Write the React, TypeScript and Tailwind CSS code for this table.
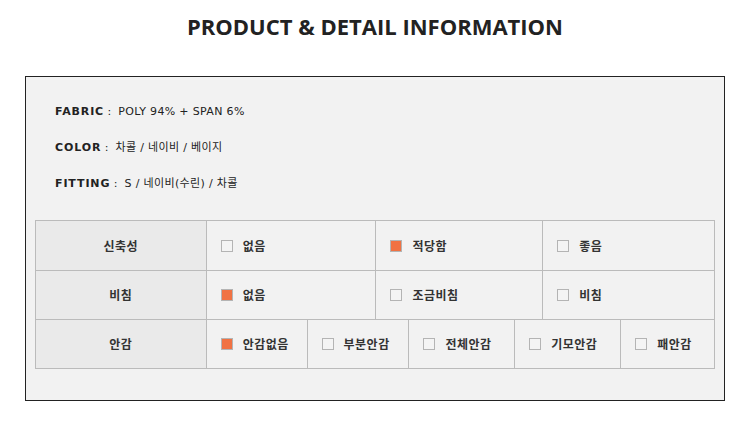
import React from 'react';
import type { FC } from 'react';

type Option = { label: string; checked?: boolean; width: string };
type Row = { title: string; options: Option[] };

const ROWS: Row[] = [
  {
    title: '신축성',
    options: [
      { label: '없음', width: 'w-[170px]' },
      { label: '적당함', checked: true, width: 'w-[167px]' },
      { label: '좋음', width: 'w-[172px]' },
    ],
  },
  {
    title: '비침',
    options: [
      { label: '없음', checked: true, width: 'w-[170px]' },
      { label: '조금비침', width: 'w-[167px]' },
      { label: '비침', width: 'w-[172px]' },
    ],
  },
  {
    title: '안감',
    options: [
      { label: '안감없음', checked: true, width: 'w-[101px]' },
      { label: '부분안감', width: 'w-[102px]' },
      { label: '전체안감', width: 'w-[106px]' },
      { label: '기모안감', width: 'w-[106px]' },
      { label: '패안감', width: 'w-[94px]' },
    ],
  },
];

const SPECS = [
  { key: 'FABRIC', value: 'POLY 94% + SPAN 6%' },
  { key: 'COLOR', value: '차콜 / 네이비 / 베이지' },
  { key: 'FITTING', value: 'S / 네이비(수린) / 차콜' },
];

const Box: FC<{ checked?: boolean }> = ({ checked }) => (
  <span
    className={`inline-block h-[12px] w-[12px] shrink-0 border border-[#b4b4b4] ${
      checked ? 'bg-[#f07243]' : 'bg-[#f4f4f4]'
    }`}
  />
);

const App: FC = () => {
  return (
    <div className="min-h-[429px] w-[750px] bg-white">
      <h1 className="flex h-[76px] items-start justify-center pt-[10px] font-['Open_Sans',sans-serif] text-[22px] font-bold leading-[32px] text-[#222]">
        PRODUCT &amp; DETAIL INFORMATION
      </h1>

      <section className="mx-[25px] h-[325px] border border-[#222] bg-[#f2f2f2]">
        <ul className="flex flex-col gap-[22px] pl-[29px] pt-[28px] font-['DejaVu_Sans','Noto_Sans_CJK_KR',sans-serif] text-[11px] leading-[14px] text-[#222]">
          {SPECS.map((spec) => (
            <li key={spec.key} className="h-[14px]">
              <span className="font-bold tracking-[0.08em]">{spec.key}</span>
              <span> : &nbsp;</span>
              <span className="tracking-[0.03em]">{spec.value}</span>
            </li>
          ))}
        </ul>

        <div className="ml-[9px] mt-[29px] w-[680px] border-l border-t border-[#bbb] font-['Noto_Sans_CJK_KR',sans-serif] text-[12px] font-bold tracking-[0.04em] text-[#333]">
          {ROWS.map((row, i) => (
            <div key={row.title} className={`flex ${i === 0 ? 'h-[50px]' : 'h-[49px]'}`}>
              <div className="flex w-[171px] items-center justify-center border-b border-r border-[#bbb] bg-[#eaeaea]">
                {row.title}
              </div>
              {row.options.map((opt) => (
                <div
                  key={opt.label}
                  className={`flex ${opt.width} items-center gap-[10px] border-b border-r border-[#bbb] pl-[14px]`}
                >
                  <Box checked={opt.checked} />
                  <span>{opt.label}</span>
                </div>
              ))}
            </div>
          ))}
        </div>
      </section>
    </div>
  );
};

export default App;
